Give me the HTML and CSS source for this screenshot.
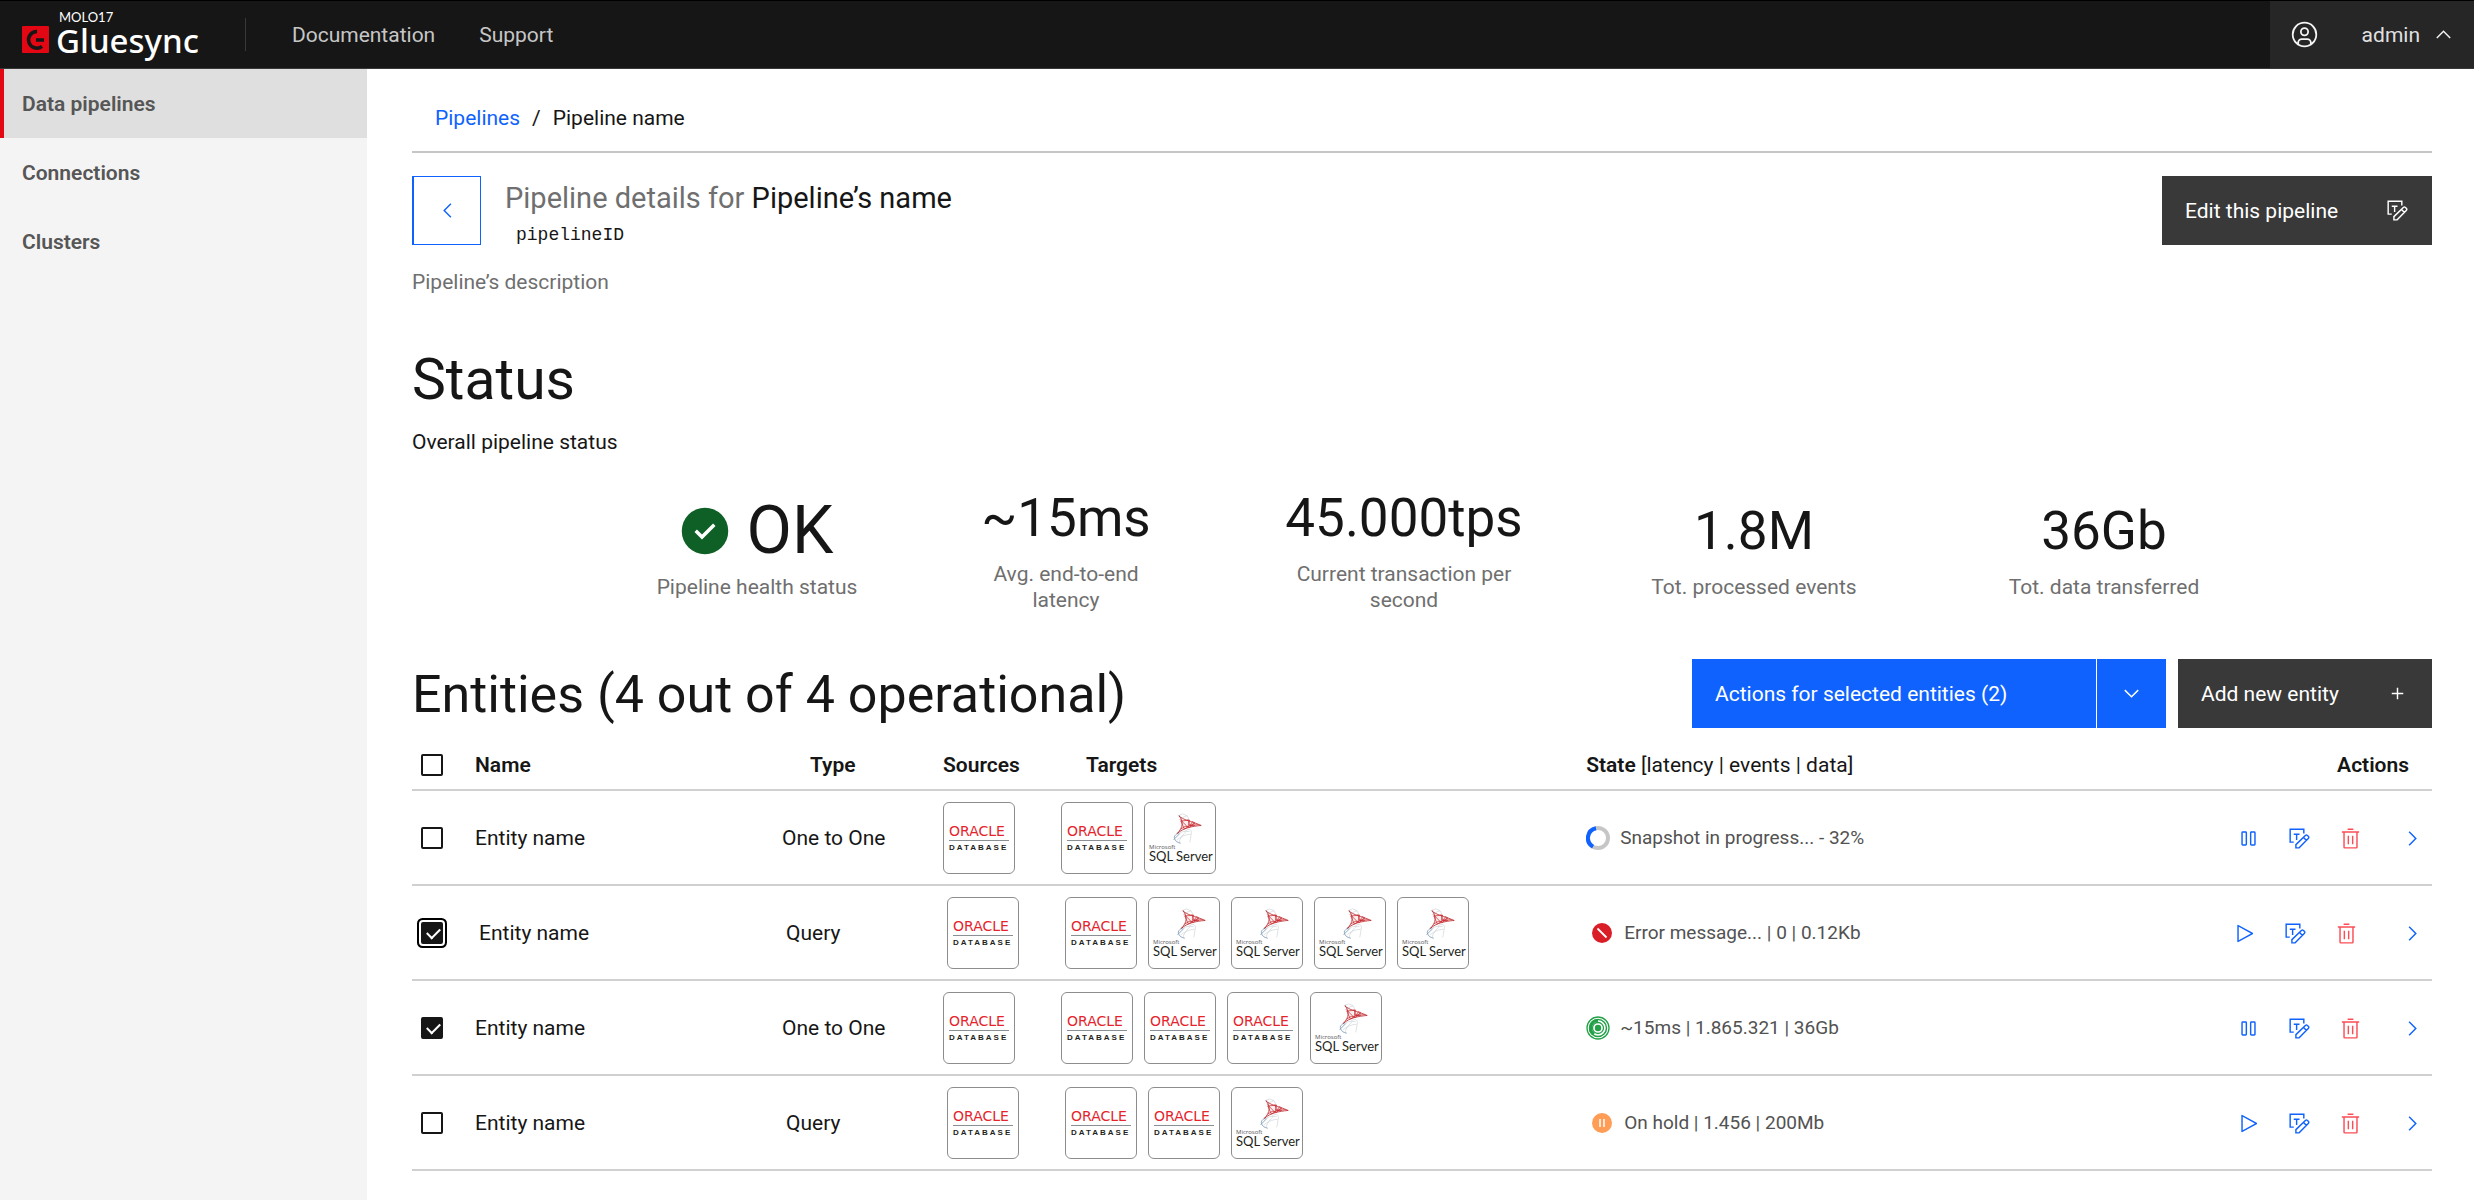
FILE: index.html
```html
<!doctype html>
<html lang="en">
<head>
<meta charset="utf-8">
<title>Gluesync - Pipeline details</title>
<link rel="stylesheet" href="styles.css">
</head>
<body>
<!-- icons -->
<svg class="sprite" aria-hidden="true">
	<symbol id="i-left" viewBox="0 0 32 32"><path d="M10 16L20 6l1.4 1.4-8.6 8.6 8.6 8.6L20 26z"/></symbol>
	<symbol id="i-right" viewBox="0 0 32 32"><path d="M22 16L12 26l-1.4-1.4 8.6-8.6-8.6-8.6L12 6z"/></symbol>
	<symbol id="i-down" viewBox="0 0 32 32"><path d="M16 22L6 12l1.4-1.4 8.6 8.6 8.6-8.6L26 12z"/></symbol>
	<symbol id="i-up" viewBox="0 0 32 32"><path d="M16 10l10 10-1.4 1.4-8.6-8.6-8.6 8.6L6 20z"/></symbol>
	<symbol id="i-add" viewBox="0 0 32 32"><path d="M17 15V8h-2v7H8v2h7v7h2v-7h7v-2z"/></symbol>
	<symbol id="i-user" viewBox="0 0 32 32"><path d="M16 8a5 5 0 1 0 5 5 5 5 0 0 0-5-5zm0 8a3 3 0 1 1 3-3 3 3 0 0 1-3 3z"/><path d="M16 2a14 14 0 1 0 14 14A14 14 0 0 0 16 2zm-6 24.377V25a3 3 0 0 1 3-3h6a3 3 0 0 1 3 3v1.377a11.9 11.9 0 0 1-12 0zm13.993-1.451A5 5 0 0 0 19 20h-6a5 5 0 0 0-4.992 4.926 12 12 0 1 1 15.985 0z"/></symbol>
	<symbol id="i-pause" viewBox="0 0 32 32"><path d="M12 8v16H8V8h4m0-2H8a2 2 0 0 0-2 2v16a2 2 0 0 0 2 2h4a2 2 0 0 0 2-2V8a2 2 0 0 0-2-2zM24 8v16h-4V8h4m0-2h-4a2 2 0 0 0-2 2v16a2 2 0 0 0 2 2h4a2 2 0 0 0 2-2V8a2 2 0 0 0-2-2z"/></symbol>
	<symbol id="i-play" viewBox="0 0 32 32"><path d="M7 28a1 1 0 0 1-1-1V5a1 1 0 0 1 1.482-.876l20 11a1 1 0 0 1 0 1.752l-20 11A1 1 0 0 1 7 28zM8 6.69v18.62L24.925 16z"/></symbol>
	<symbol id="i-trash" viewBox="0 0 32 32"><path d="M12 12h2v12h-2zM18 12h2v12h-2zM4 6v2h2v20a2 2 0 0 0 2 2h16a2 2 0 0 0 2-2V8h2V6zm4 22V8h16v20zM12 2h8v2h-8z"/></symbol>
	<symbol id="i-edit" viewBox="0 0 32 32"><g fill="none" stroke="currentColor" stroke-width="2"><path d="M22 9V3H3v18h5M8 10h8M12 10v8"/><path d="M11 29v-4.500L24.500 11.500a1.500 1.500 0 0 1 2.200 0l1.800 1.800a1.500 1.500 0 0 1 0 2.200L15.500 29zM21.500 14.500l4 4"/></g></symbol>
	<symbol id="i-check" viewBox="0 0 32 32"><circle cx="16" cy="16" r="15.500" fill="#0e6027"/><path d="M14 21.600l-5-5L10.600 15l3.400 3.400L21.400 11l1.600 1.600z" fill="#fff"/></symbol>

	<symbol id="s-progress" viewBox="0 0 24 24"><circle cx="12" cy="12" r="10" fill="none" stroke="#c6c6c6" stroke-width="4"/><path d="M10 2.200A10 10 0 0 0 7 20.700" fill="none" stroke="#0f62fe" stroke-width="4"/></symbol>
	<symbol id="s-error" viewBox="0 0 24 24"><circle cx="12" cy="12" r="10" fill="#da1e28"/><path d="M7.500 7.500l9 9" stroke="#fff" stroke-width="1.800"/></symbol>
	<symbol id="s-live" viewBox="0 0 24 24"><g fill="none" stroke="#24a148"><circle cx="12" cy="12" r="11" stroke-width="1.300"/><circle cx="12" cy="12" r="8.500" stroke-width="1.500"/><circle cx="12" cy="12" r="5.500" stroke-width="1.300"/><path d="M12 4.500A7.500 7.500 0 0 0 8 18.300" stroke-width="3"/></g><circle cx="12" cy="12" r="3.200" fill="#24a148"/></symbol>
	<symbol id="s-hold" viewBox="0 0 24 24"><circle cx="12" cy="12" r="10" fill="#ff9d57"/><path d="M10 8v8M14 8v8" stroke="#fff" stroke-width="1.500"/></symbol>

	<symbol id="mssql" viewBox="24 10 36 36">
		<g fill="none" stroke="#c9ced3" stroke-width=".7">
			<path d="M32 13l5-2 5 2 2 4M32 13l3 3 7-3M40 30c5-3 7-1 7 2-1 5-1 8-2 11M31 34c4-3 8-4 14-3M30 41c4-4 10-7 16-7M33 43c1-5 5-9 8-12"/>
		</g>
		<path d="M33 32c-4 2-6 4-5 7s3 4 7 5M27 40l7-7" fill="none" stroke="#7f9db9" stroke-width="1"/>
		<path d="M33 13c4 5 14 6 25 11-11 1-20 3-27 9 7-7 7-14 2-20z" fill="#c8242b" fill-opacity=".08" stroke="#b8292f" stroke-width=".9"/>
		<path d="M34 17l9 9 2-8-10 1 4 9 12-7-6 5-5-1-5 3M43 17l2 7 10-1M49 19l-4 5 6 0" fill="none" stroke="#c8242b" stroke-width=".8"/>
	</symbol>
</svg>

<header class="topbar">
	<a class="brand" href="#">
		<svg class="brand-mark" viewBox="0 0 27 27">
			<rect width="27" height="27" rx="1" fill="#e30613"/>
			<path d="M15 5.500A8.300 8.300 0 1 0 20 20.300M14 14h8" fill="none" stroke="#161616" stroke-width="3.500"/>
		</svg>
		<span class="brand-text">
			<span class="brand-sup">MOLO17</span>
			<span class="brand-name">Gluesync</span>
		</span>
	</a>
	<nav class="topnav">
		<a href="#">Documentation</a>
		<a href="#">Support</a>
	</nav>
	<button class="user" type="button">
		<svg class="icon-lg"><use href="#i-user"/></svg>
		<span>admin</span>
		<svg class="icon"><use href="#i-up"/></svg>
	</button>
</header>

<div class="layout">
	<nav class="sidenav">
		<a class="current" href="#">Data pipelines</a>
		<a href="#">Connections</a>
		<a href="#">Clusters</a>
	</nav>

	<main class="content">
		<div class="breadcrumb">
			<a href="#">Pipelines</a>
			<span>/</span>
			<span>Pipeline name</span>
		</div>

		<div class="pagehead">
			<button class="back" type="button" aria-label="Back"><svg class="icon"><use href="#i-left"/></svg></button>
			<div class="pagetitle">
				<h1><span>Pipeline details for</span> Pipeline’s name</h1>
				<code>pipelineID</code>
			</div>
			<button class="btn btn-dark btn-edit" type="button">Edit this pipeline <svg class="icon"><use href="#i-edit"/></svg></button>
		</div>
		<p class="description">Pipeline’s description</p>

		<h2 class="status-title">Status</h2>
		<p class="status-sub">Overall pipeline status</p>

		<div class="stats">
			<div class="stat">
				<div class="value value-ok"><svg class="icon-ok"><use href="#i-check"/></svg>OK</div>
				<div class="label">Pipeline health status</div>
			</div>
			<div class="stat">
				<div class="value">~15ms</div>
				<div class="label">Avg. end-to-end<br>latency</div>
			</div>
			<div class="stat">
				<div class="value">45.000tps</div>
				<div class="label">Current transaction per<br>second</div>
			</div>
			<div class="stat">
				<div class="value">1.8M</div>
				<div class="label">Tot. processed events</div>
			</div>
			<div class="stat">
				<div class="value">36Gb</div>
				<div class="label">Tot. data transferred</div>
			</div>
		</div>

		<div class="entities-head">
			<h2>Entities (4 out of 4 operational)</h2>
			<div class="split">
				<button class="btn btn-blue" type="button">Actions for selected entities (2)</button>
				<button class="btn btn-blue btn-caret" type="button" aria-label="More actions"><svg class="icon"><use href="#i-down"/></svg></button>
			</div>
			<button class="btn btn-dark btn-add" type="button">Add new entity <svg class="icon"><use href="#i-add"/></svg></button>
		</div>

		<table class="entities">
			<colgroup>
				<col class="c-check"><col class="c-name"><col class="c-type"><col class="c-source"><col class="c-target"><col class="c-state"><col class="c-actions">
			</colgroup>
			<thead>
				<tr>
					<th><input type="checkbox" aria-label="Select all"></th>
					<th>Name</th>
					<th class="th-type">Type</th>
					<th>Sources</th>
					<th class="th-target">Targets</th>
					<th>State <span>[latency | events | data]</span></th>
					<th class="th-actions">Actions</th>
				</tr>
			</thead>
			<tbody>
				<tr>
					<td><input type="checkbox" id="e1"></td>
					<td><label for="e1">Entity name</label></td>
					<td>One to One</td>
					<td><div class="dbs"><div class="db oracle"><b>ORACLE</b><i>DATABASE</i></div></div></td>
					<td>
						<div class="dbs">
							<div class="db oracle"><b>ORACLE</b><i>DATABASE</i></div>
							<div class="db mssql"><svg><use href="#mssql"/></svg><i>Microsoft</i><b>SQL Server</b></div>
						</div>
					</td>
					<td><div class="state"><svg><use href="#s-progress"/></svg>Snapshot in progress... - 32%</div></td>
					<td>
						<div class="actions">
							<button type="button" aria-label="Pause"><svg class="icon"><use href="#i-pause"/></svg></button>
							<button type="button" aria-label="Edit"><svg class="icon"><use href="#i-edit"/></svg></button>
							<button type="button" class="danger" aria-label="Delete"><svg class="icon"><use href="#i-trash"/></svg></button>
							<button type="button" class="open" aria-label="Open"><svg class="icon"><use href="#i-right"/></svg></button>
						</div>
					</td>
				</tr>
				<tr class="focused">
					<td><input type="checkbox" id="e2" checked></td>
					<td><label for="e2">Entity name</label></td>
					<td>Query</td>
					<td><div class="dbs"><div class="db oracle"><b>ORACLE</b><i>DATABASE</i></div></div></td>
					<td>
						<div class="dbs">
							<div class="db oracle"><b>ORACLE</b><i>DATABASE</i></div>
							<div class="db mssql"><svg><use href="#mssql"/></svg><i>Microsoft</i><b>SQL Server</b></div>
							<div class="db mssql"><svg><use href="#mssql"/></svg><i>Microsoft</i><b>SQL Server</b></div>
							<div class="db mssql"><svg><use href="#mssql"/></svg><i>Microsoft</i><b>SQL Server</b></div>
							<div class="db mssql"><svg><use href="#mssql"/></svg><i>Microsoft</i><b>SQL Server</b></div>
						</div>
					</td>
					<td><div class="state"><svg><use href="#s-error"/></svg>Error message... | 0 | 0.12Kb</div></td>
					<td>
						<div class="actions">
							<button type="button" aria-label="Start"><svg class="icon"><use href="#i-play"/></svg></button>
							<button type="button" aria-label="Edit"><svg class="icon"><use href="#i-edit"/></svg></button>
							<button type="button" class="danger" aria-label="Delete"><svg class="icon"><use href="#i-trash"/></svg></button>
							<button type="button" class="open" aria-label="Open"><svg class="icon"><use href="#i-right"/></svg></button>
						</div>
					</td>
				</tr>
				<tr>
					<td><input type="checkbox" id="e3" checked></td>
					<td><label for="e3">Entity name</label></td>
					<td>One to One</td>
					<td><div class="dbs"><div class="db oracle"><b>ORACLE</b><i>DATABASE</i></div></div></td>
					<td>
						<div class="dbs">
							<div class="db oracle"><b>ORACLE</b><i>DATABASE</i></div>
							<div class="db oracle"><b>ORACLE</b><i>DATABASE</i></div>
							<div class="db oracle"><b>ORACLE</b><i>DATABASE</i></div>
							<div class="db mssql"><svg><use href="#mssql"/></svg><i>Microsoft</i><b>SQL Server</b></div>
						</div>
					</td>
					<td><div class="state"><svg><use href="#s-live"/></svg>~15ms | 1.865.321 | 36Gb</div></td>
					<td>
						<div class="actions">
							<button type="button" aria-label="Pause"><svg class="icon"><use href="#i-pause"/></svg></button>
							<button type="button" aria-label="Edit"><svg class="icon"><use href="#i-edit"/></svg></button>
							<button type="button" class="danger" aria-label="Delete"><svg class="icon"><use href="#i-trash"/></svg></button>
							<button type="button" class="open" aria-label="Open"><svg class="icon"><use href="#i-right"/></svg></button>
						</div>
					</td>
				</tr>
				<tr class="query">
					<td><input type="checkbox" id="e4"></td>
					<td><label for="e4">Entity name</label></td>
					<td>Query</td>
					<td><div class="dbs"><div class="db oracle"><b>ORACLE</b><i>DATABASE</i></div></div></td>
					<td>
						<div class="dbs">
							<div class="db oracle"><b>ORACLE</b><i>DATABASE</i></div>
							<div class="db oracle"><b>ORACLE</b><i>DATABASE</i></div>
							<div class="db mssql"><svg><use href="#mssql"/></svg><i>Microsoft</i><b>SQL Server</b></div>
						</div>
					</td>
					<td><div class="state"><svg><use href="#s-hold"/></svg>On hold | 1.456 | 200Mb</div></td>
					<td>
						<div class="actions">
							<button type="button" aria-label="Start"><svg class="icon"><use href="#i-play"/></svg></button>
							<button type="button" aria-label="Edit"><svg class="icon"><use href="#i-edit"/></svg></button>
							<button type="button" class="danger" aria-label="Delete"><svg class="icon"><use href="#i-trash"/></svg></button>
							<button type="button" class="open" aria-label="Open"><svg class="icon"><use href="#i-right"/></svg></button>
						</div>
					</td>
				</tr>
			</tbody>
		</table>
	</main>
</div>
</body>
</html>
```
FILE: styles.css
```css
*{margin:0;padding:0;box-sizing:border-box;}
body{display:flex; flex-direction:column; min-height:100vh; background:#fff; color:#161616; font:21px/26px Roboto,"Liberation Sans",sans-serif;}
a{text-decoration:none; color:inherit;}
button{font:inherit; color:inherit; background:none; border:0; cursor:pointer;}
h1,h2{font-weight:400;}
svg{display:block; flex:none;}
.sprite{position:absolute; width:0; height:0;}
.icon{width:23px; height:23px; fill:currentColor;}
.icon-lg{width:29px; height:29px; fill:currentColor;}

/* top bar */
.topbar{display:flex; align-items:stretch; height:69px; background:#161616; border-top:1px solid #000; border-bottom:1px solid #393939; color:#c6c6c6;}
.brand{display:flex; align-items:flex-start; gap:7px; padding-left:22px; color:#fff;}
.brand-mark{width:27px; height:27px; margin-top:25px;}
.brand-text{display:flex; flex-direction:column; padding-top:9px;}
.brand-sup{padding-left:3px; font:13px/14px Lato,sans-serif;}
.brand-name{font:500 33px/34px "Noto Sans",sans-serif;}
.topnav{display:flex; align-items:center; gap:44px; margin:17px 0 17px 46px; padding-left:46px; border-left:1px solid #393939;}
.user{display:flex; align-items:center; margin-left:auto; padding:0 19px 0 20px; background:#262626; color:#f4f4f4;}
.user span{margin:0 12px 0 43px; color:#e0e0e0;}

/* side nav */
.layout{display:flex; flex:1;}
.sidenav{flex:none; width:367px; background:#f4f4f4;}
.sidenav a{display:flex; align-items:center; height:69px; padding-left:18px; border-left:4px solid transparent; font-weight:600; color:#565656;}
.sidenav .current{background:#dfdfdf; border-color:#e30613;}

.content{flex:1; padding:0 42px 30px 45px;}
.breadcrumb{display:flex; align-items:center; gap:12px; height:84px; padding:15px 0 0 23px; border-bottom:2px solid #c6c6c6;}
.breadcrumb a{color:#0f62fe;}

.pagehead{display:flex; align-items:flex-start; margin-top:23px;}
.back{display:flex; align-items:center; justify-content:center; width:69px; height:69px; border:1px solid #0f62fe; border-left-width:2px; color:#0f62fe;}
.pagetitle{display:flex; flex-direction:column; gap:7px; flex:1; padding:3px 0 0 24px;}
.pagetitle h1{font-size:29px; line-height:38px;}
.pagetitle h1 span{color:#6f6f6f;}
.pagetitle code{padding-left:11px; font:18px/22px "Liberation Mono",monospace;}
.description{margin-top:23px; color:#6f6f6f;}

.btn{display:flex; align-items:center; justify-content:space-between; height:69px; padding:0 23px; color:#fff;}
.btn-dark{background:#393939;}
.btn-blue{background:#0f62fe;}
.btn-edit{width:270px;}
.btn-add{width:254px; margin-left:12px;}

/* status */
.status-title{margin-top:49px; font-size:57px; line-height:72px;}
.status-sub{margin-top:13px;}
.stats{display:grid; grid-template-columns:292fr 326fr 350fr 350fr 350fr; align-items:center; margin-top:28px; padding:0 153px 0 199px; text-align:center;}
.value{display:flex; align-items:center; justify-content:center; gap:18px; margin-bottom:8px; font-size:53px; line-height:70px;}
.value-ok{font-size:66px;}
.icon-ok{width:48px; height:48px;}
.label{color:#6f6f6f;}

/* entities */
.entities-head{display:flex; align-items:center; margin-top:46px;}
.entities-head h2{flex:1; padding-top:3px; font-size:52px; line-height:66px;}
.split{display:flex; gap:1px;}
.split .btn:first-child{width:404px;}
.split .btn-caret{justify-content:center; width:69px;}

.entities{width:100%; border-collapse:collapse; table-layout:fixed;}
.c-check{width:63px;}
.c-name{width:307px;}
.c-type{width:161px;}
.c-source{width:118px;}
.c-target{width:26%;}
.c-actions{width:220px;}
.entities th{height:62px; padding-top:12px; text-align:left; font-weight:600; border-bottom:2px solid #d0d0d0;}
.entities th span{font-weight:400;}
.entities .th-type{padding-left:28px;}
.entities .th-target{padding-left:25px;}
.entities .th-actions{padding-right:23px; text-align:right;}
.entities td{height:95px; padding-top:1px; border-bottom:2px solid #d0d0d0;}
.entities .focused td{padding-left:4px;}
.entities .query td{padding-left:4px;}
.entities .focused td:first-child,
.entities .query td:first-child,
.entities .query td:nth-child(2){padding-left:0;}

.entities input{display:block; appearance:none; width:22px; height:22px; margin-left:9px; border:2px solid #161616; border-radius:2px; background:#fff;}
.entities input:checked{background:#161616;}
.entities input:checked::after{content:""; display:block; width:11px; height:6px; margin:4px 0 0 4px; border:solid #fff; border-width:0 0 2px 2px; transform:rotate(-45deg);}
.focused input{box-shadow:0 0 0 2px #fff,0 0 0 4px #000;}

/* database logos */
.dbs{display:flex; gap:11px;}
.db{display:flex; flex-direction:column; width:72px; height:72px; border:1px solid #8d8d8d; border-radius:6px;}
.db b,.db i{font-style:normal; font-weight:400; white-space:nowrap;}
.oracle{padding:20px 5px 0;}
.oracle b{padding-bottom:1px; border-bottom:1px solid #8a8f94; font:14px/16px "DejaVu Sans",sans-serif; color:#e5232b;}
.oracle i{padding-top:2px; font:bold 8px/9px "Liberation Sans",sans-serif; letter-spacing:2px; color:#231f20;}
.mssql{padding:10px 4px 0;}
.mssql svg{width:36px; height:32px; margin-left:20px;}
.mssql i{font:6px/5px "Open Sans",sans-serif; color:#555;}
.mssql b{font:13px/13px Lato,sans-serif; color:#231f20;}

.state{display:flex; align-items:center; gap:10px; font-size:19px; color:#525252;}
.state svg{width:24px; height:24px;}

.actions{display:flex; justify-content:flex-end; gap:28px; padding-right:8px; color:#0f62fe;}
.actions .danger{color:#fa4d56;}
.actions .open{margin-left:11px;}
.focused .actions .open{margin-left:15px;}
```
